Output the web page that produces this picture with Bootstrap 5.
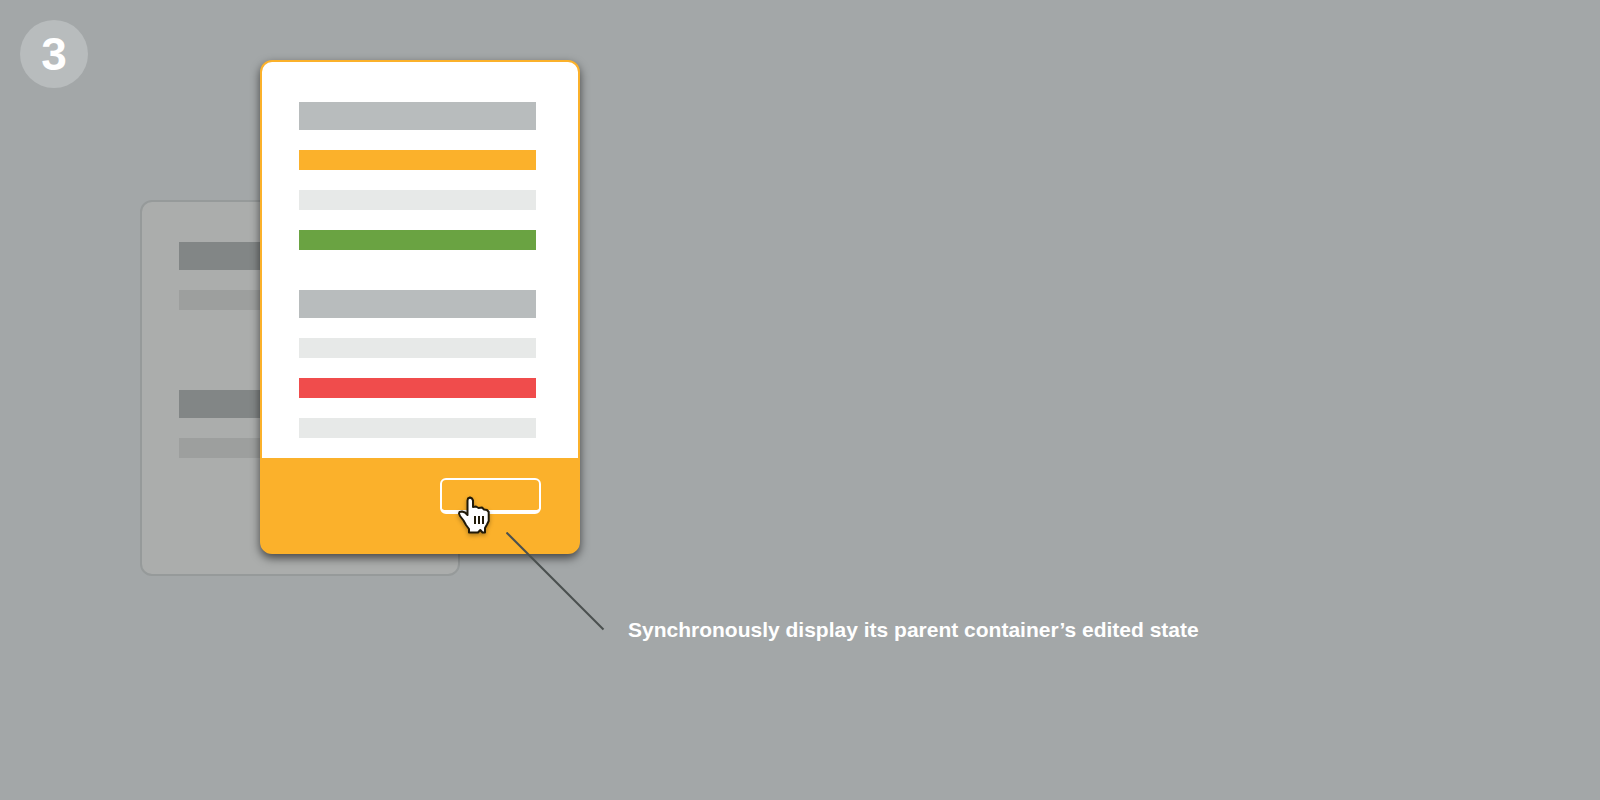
<!DOCTYPE html>
<html lang="en">
<head>
<meta charset="utf-8">
<meta name="viewport" content="width=device-width, initial-scale=1">
<title>Step 3: edited state</title>
<link rel="stylesheet" href="https://cdn.jsdelivr.net/npm/bootstrap@5.3.0/dist/css/bootstrap.min.css">
<style>
  body { background: #a3a7a8; font-family: "Liberation Sans", Arial, sans-serif; }
  .step-page { padding: 20px; gap: 52px; }
  .step-number { width: 68px; height: 68px; background: #b8bcbd; font-size: 46px; line-height: 1; }

  /* Two overlapping panels share the middle column and row */
  .panels { display: grid; grid-template-columns: 120px 200px 120px; grid-template-rows: 140px auto 22px; margin-top: 40px; }
  .panel { border: 2px solid; border-radius: 12px; }
  .panel-back { grid-area: 2 / 1 / 4 / 3; background: #abadac; border-color: #969a9a; padding: 40px 42px 0 37px; }
  .panel-front { grid-area: 1 / 2 / 3 / 4; z-index: 1; background: #fbb12b; border-color: #fbb12b; box-shadow: 0 4px 10px rgba(0, 0, 0, .6); }
  .panel-content { padding: 40px 42px 20px 37px; background: #fff; border-radius: 10px 10px 0 0; }
  .panel-actions { padding: 20px 37px 38px; }

  .bars { display: flex; flex-direction: column; gap: 20px; }
  .bar { height: 20px; background: #e7e9e8; }
  .bar-title { height: 28px; background: #b8bcbd; }
  .bar-edited { background: #fbb12b; }
  .bar-valid { background: #6aa342; }
  .bar-error { background: #f04c4c; }
  .bar-next { margin-top: 20px; }
  .panel-back .bar { background: #9d9f9e; }
  .panel-back .bar-title { background: #828686; }
  .panel-back .bar-next { margin-top: 60px; }

  .btn-save { width: 101px; height: 36px; border: 2px solid #fff; border-bottom-width: 4px; border-radius: 6px; }
  .btn-save:hover { border-color: #fff; }
  .pointer { left: 16px; top: 15px; filter: drop-shadow(0 2px 2px rgba(0, 0, 0, .3)); }

  .callout { left: 366px; top: 472px; z-index: 2; gap: 23px; }
  .callout-line { margin-bottom: 11px; }
  .callout-text { font-size: 21px; line-height: 24px; }
</style>
</head>
<body class="min-vh-100">
<main class="step-page d-flex align-items-start">
  <div class="step-number rounded-circle d-flex flex-shrink-0 align-items-center justify-content-center text-white fw-bold">3</div>

  <figure class="panels position-relative mb-0">
    <div class="panel panel-back">
      <div class="bars">
        <div class="bar bar-title"></div>
        <div class="bar"></div>
        <div class="bar bar-title bar-next"></div>
        <div class="bar"></div>
      </div>
    </div>

    <div class="panel panel-front">
      <div class="panel-content bars">
        <div class="bar bar-title"></div>
        <div class="bar bar-edited"></div>
        <div class="bar"></div>
        <div class="bar bar-valid"></div>
        <div class="bar bar-title bar-next"></div>
        <div class="bar"></div>
        <div class="bar bar-error"></div>
        <div class="bar"></div>
      </div>
      <div class="panel-actions d-flex justify-content-end">
        <button type="button" class="btn btn-save p-0 position-relative" aria-label="Save">
          <svg class="pointer position-absolute" width="34" height="41" viewBox="0 0 34 41" aria-hidden="true">
            <path d="M11 37.500V34L8 30L5.500 25.500L2 21L1 18.500L1.500 17L4 16.500L7 17.500L9.500 20V5.500L10 3.500L12 2.500L14 3.500L15 5.500V12L18 11.500L20.500 13L24 12.500L26 14.500L29 15L30.700 17V26L29 29.500L27 33V37.500H24.500L22.300 35L20 37.500Z" fill="#fff" stroke="#211a08" stroke-width="2" stroke-linejoin="round"/>
            <path d="M17 21V29M21 21V29M25 21V29" fill="none" stroke="#211a08" stroke-width="2"/>
          </svg>
        </button>
      </div>
    </div>

    <figcaption class="callout position-absolute d-flex align-items-end text-white fw-bold text-nowrap">
      <svg class="callout-line flex-shrink-0" width="99" height="99" viewBox="0 0 99 99" aria-hidden="true">
        <path d="M.5 .5L97.500 97.500" stroke="#4a504f" stroke-width="2" fill="none"/>
      </svg>
      <span class="callout-text">Synchronously display its parent container’s edited state</span>
    </figcaption>
  </figure>
</main>
<script src="https://cdn.jsdelivr.net/npm/bootstrap@5.3.0/dist/js/bootstrap.bundle.min.js"></script>
</body>
</html>
